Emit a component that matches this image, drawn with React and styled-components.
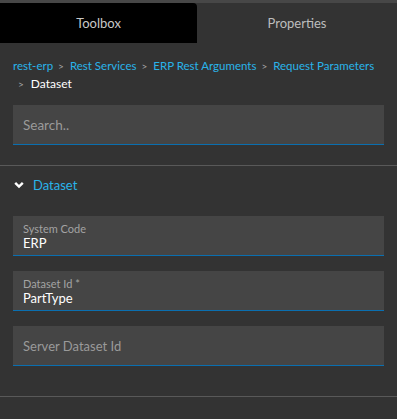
import React from "react";
import styled, { createGlobalStyle } from "styled-components";

const Global = createGlobalStyle`
  html, body { margin: 0; padding: 0; background: #333333; }
  body { font-family: Lato, "Noto Sans", sans-serif; }
  * { box-sizing: border-box; }
`;

const Page = styled.div`
  width: 397px;
  height: 419px;
  background: #333333;
  border-top: 3px solid #474747;
  display: flex;
  flex-direction: column;
  overflow: hidden;
`;

const Tabs = styled.div`
  display: flex;
  height: 40px;
`;

const Tab = styled.div`
  flex: ${(p) => (p.$w ? `0 0 ${p.$w}px` : "1 1 auto")};
  display: flex;
  align-items: center;
  justify-content: center;
  font-size: 13px;
  color: ${(p) => (p.$active ? "#c8c8c8" : "#bdbdbd")};
  background: ${(p) => (p.$active ? "#000000" : "transparent")};
  border-top-right-radius: ${(p) => (p.$active ? "4px" : "0")};
`;

const Crumbs = styled.div`
  padding: 14px 13px 0 13px;
  font-size: 11.5px;
  line-height: 18px;
  white-space: nowrap;
`;

const Crumb = styled.span`
  color: ${(p) => (p.$current ? "#ffffff" : "#29b3ea")};
  font-size: ${(p) => (p.$current ? "12px" : "inherit")};
`;

const Sep = styled.span`
  color: #a8a8a8;
  margin: ${(p) => (p.$first ? "0 7px 0 5px" : "0 6px 0 5px")};
  font-size: 10px;
`;

const Section = styled.div`
  padding: ${(p) => p.$pad || "0 13px"};
  display: flex;
  flex-direction: column;
  gap: ${(p) => p.$gap || "0"};
`;

const Field = styled.div`
  height: 40px;
  background: #454545;
  border-bottom: 1px solid #0a6fb0;
  display: flex;
  flex-direction: column;
  justify-content: center;
  padding: ${(p) => (p.$filled ? "3px 10px 0 10px" : "0 10px")};
`;

const Label = styled.div`
  font-size: 11px;
  color: #a3a3a3;
  line-height: 13px;
`;

const Value = styled.div`
  font-size: 13px;
  color: #ffffff;
  line-height: 17px;
`;

const Placeholder = styled.div`
  font-size: ${(p) => p.$size || 13}px;
  color: #9a9a9a;
`;

const Divider = styled.div`
  height: 1px;
  background: #595959;
  margin-top: ${(p) => p.$mt}px;
`;

const Expander = styled.div`
  display: flex;
  align-items: center;
  gap: 9px;
  padding: 0 14px;
  height: 38px;
  font-size: 13px;
  color: #29b3ea;
`;

export default function App() {
  return (
    <>
      <Global />
      <Page>
        <Tabs>
          <Tab $active $w={197}>Toolbox</Tab>
          <Tab>Properties</Tab>
        </Tabs>
        <Crumbs>
          <Crumb>rest-erp</Crumb>
          <Sep>&gt;</Sep>
          <Crumb>Rest Services</Crumb>
          <Sep>&gt;</Sep>
          <Crumb>ERP Rest Arguments</Crumb>
          <Sep>&gt;</Sep>
          <Crumb>Request Parameters</Crumb>
          <br />
          <Sep $first>&gt;</Sep>
          <Crumb $current>Dataset</Crumb>
        </Crumbs>
        <Section $pad="12px 13px 0 13px">
          <Field>
            <Placeholder $size={13.5}>Search..</Placeholder>
          </Field>
        </Section>
        <Divider $mt={20} />
        <Expander>
          <svg width="10" height="8" viewBox="0 0 10 8">
            <path d="M1.2 1.8 L5 5.6 L8.8 1.8" stroke="#ffffff" strokeWidth="2.4" fill="none" />
          </svg>
          <span>Dataset</span>
        </Expander>
        <Section $pad="12px 13px 0 13px" $gap="15px">
          <Field $filled>
            <Label>System Code</Label>
            <Value>ERP</Value>
          </Field>
          <Field $filled>
            <Label>Dataset Id *</Label>
            <Value>PartType</Value>
          </Field>
          <Field>
            <Placeholder>Server Dataset Id</Placeholder>
          </Field>
        </Section>
        <Divider $mt={30} />
      </Page>
    </>
  );
}
